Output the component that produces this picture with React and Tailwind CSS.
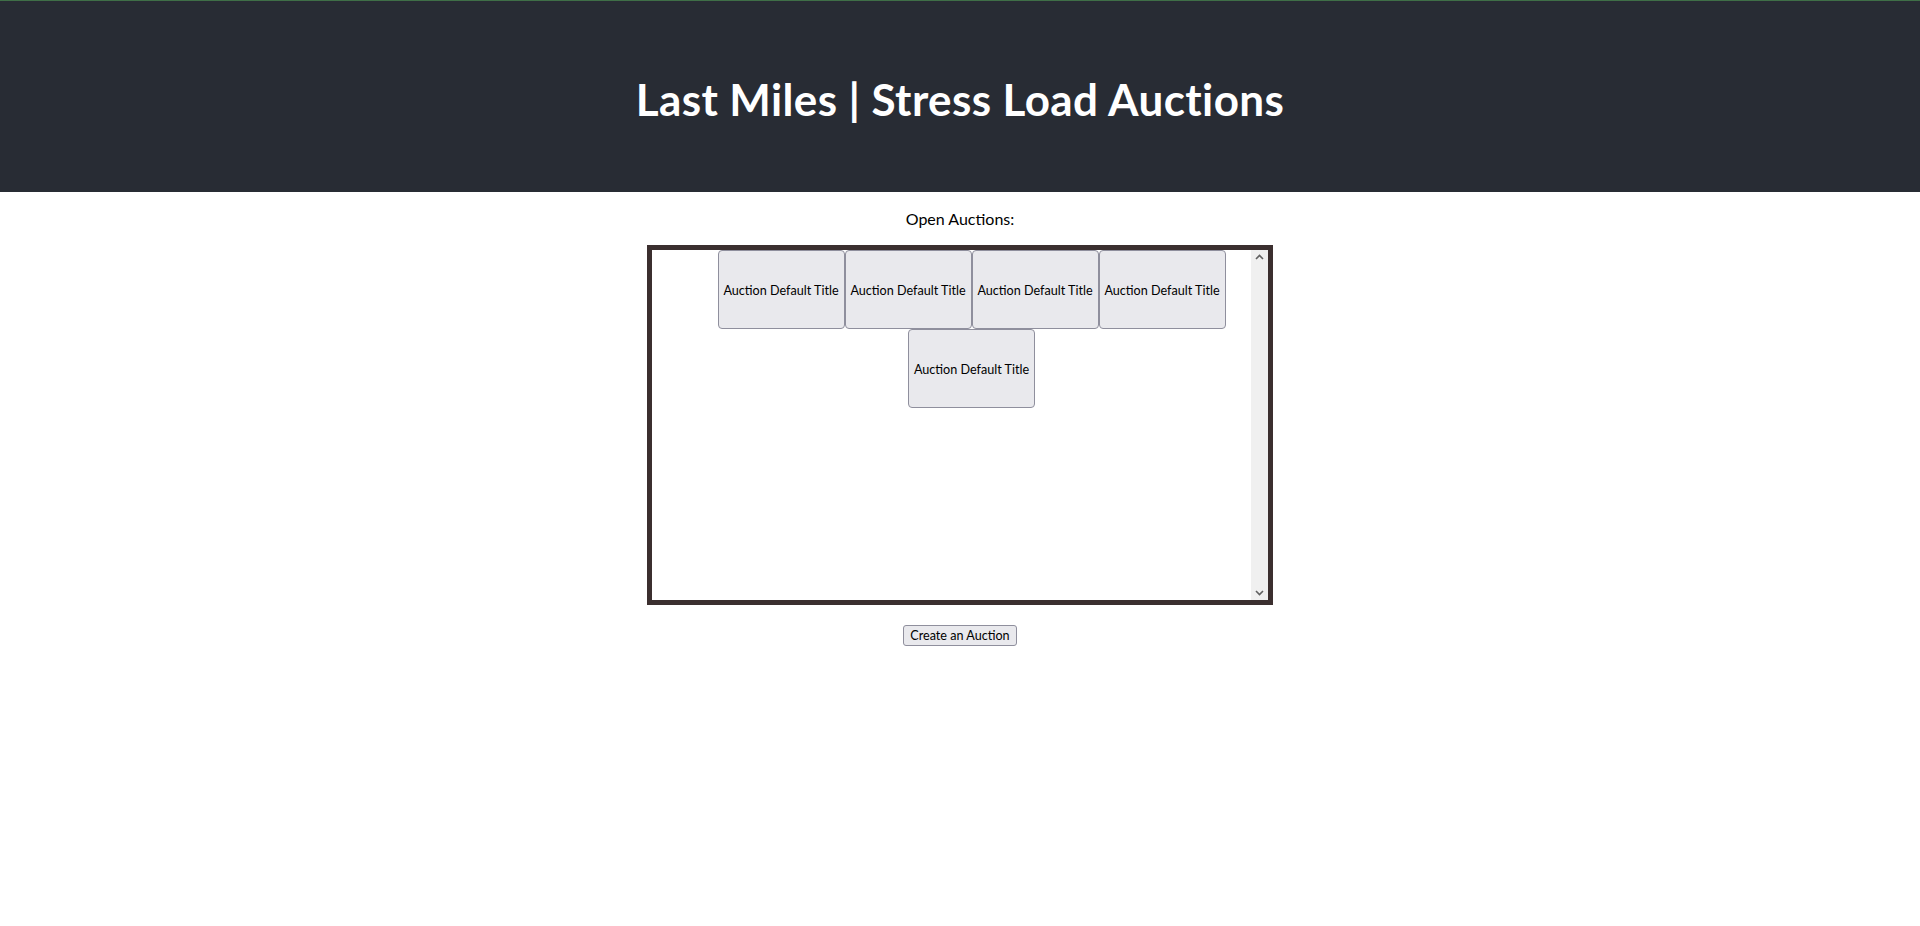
import React from 'react'

function ScrollArrow({ up }) {
  return (
    <svg width="9" height="6" viewBox="0 0 9 6" className="block">
      <polyline
        points={up ? '1,5 4.5,1.5 8,5' : '1,1 4.5,4.5 8,1'}
        fill="none"
        stroke="#606060"
        strokeWidth="1.6"
      />
    </svg>
  )
}

export default function App() {
  const auctions = [1, 2, 3, 4, 5].map(id => ({ id, title: 'Auction Default Title' }))

  return (
    <div className="min-h-screen bg-white text-black font-['Lato','Noto_Sans',sans-serif]">
      {/* Header */}
      <header className="h-[192px] bg-[#282c34] border-t border-[#3f6f47] flex items-center justify-center pt-[4px]">
        <h1 className="text-white font-bold text-[44px] tracking-[0.4px] leading-none">Last Miles | Stress Load Auctions</h1>
      </header>

      <div className="flex flex-col items-center">
        <p className="my-4 text-[16px] leading-[21px]">Open Auctions:</p>

        {/* Auction list */}
        <div className="w-[626px] h-[360px] border-[5px] border-[#3b2f2f] flex">
          <div className="flex-1 pl-[40px] flex flex-wrap justify-center content-start">
            {auctions.map(a => (
              <button
                key={a.id}
                className="w-[127px] h-[79px] pt-[3px] bg-[#e9e9ed] border border-[#8f8f9d] rounded-[4px] text-[12.6px] whitespace-nowrap text-black"
              >
                {a.title}
              </button>
            ))}
          </div>
          <div className="w-[17px] bg-[#f0f0f0] flex flex-col items-center justify-between py-[4px]">
            <ScrollArrow up />
            <ScrollArrow />
          </div>
        </div>

        <button className="mt-[20px] h-[21px] px-[6px] pt-[1px] bg-[#e9e9ed] border border-[#8f8f9d] rounded-[3px] text-[12.6px] leading-none text-black">
          Create an Auction
        </button>
      </div>
    </div>
  )
}
